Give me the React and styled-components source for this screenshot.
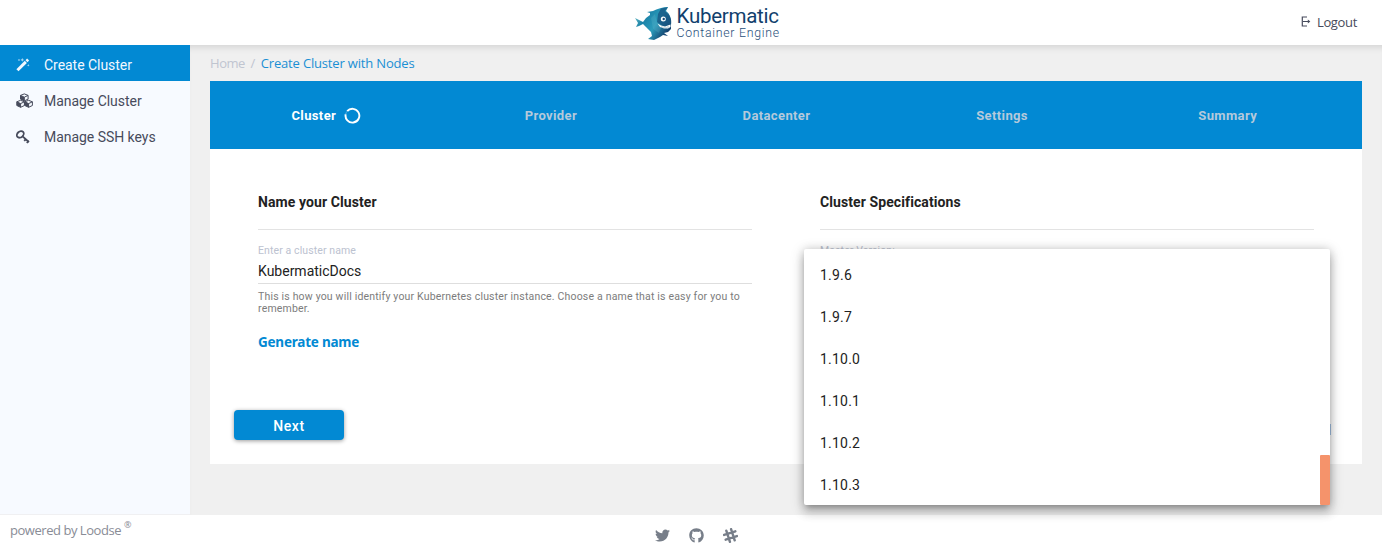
import React from "react";
import styled, { createGlobalStyle } from "styled-components";
import { FaTwitter, FaGithub } from "react-icons/fa";

const GlobalStyle = createGlobalStyle`
  * { box-sizing: border-box; }
  body { margin: 0; background: #f0f0f0; font-family: Roboto, sans-serif; overflow: hidden; }
`;

const Page = styled.div`
  position: relative;
  display: flex;
  flex-direction: column;
  height: 555px;
  width: 100%;
`;

const Header = styled.header`
  display: grid;
  grid-template-columns: 1fr 146px 1fr;
  align-items: center;
  height: 45px;
  padding-right: 25px;
  padding-left: 59px;
  background: #fff;
`;

const LogoSlot = styled.div`
  grid-column: 2;
  height: 45px;
  svg { display: block; }
`;

const Logout = styled.a`
  display: flex;
  justify-content: flex-end;
  align-items: center;
  gap: 6px;
  margin-top: -2px;
  color: #474b5c;
  font: 400 13px/20px "Open Sans", sans-serif;
  letter-spacing: -0.34px;
`;

const Body = styled.div`
  display: flex;
  height: 470px;
`;

const Sidebar = styled.nav`
  width: 190px;
  background: #f7faff;
  border-bottom: 1px solid #f0f0f2;
`;

const NavItem = styled.a`
  display: flex;
  align-items: center;
  height: 36px;
  padding: 3px 0 0 16px;
  font-size: 14px;
  letter-spacing: -0.04px;
  color: ${(p) => (p.$active ? "#f2f8ff" : "#474b5c")};
  background: ${(p) => (p.$active ? "#0289d3" : "transparent")};
`;

const NavIcon = styled.span`
  display: flex;
  width: 28px;
`;

const Main = styled.main`
  flex: 1;
  padding: 0 20px;
  box-shadow: inset 0 7px 7px -5px rgba(0, 0, 0, 0.13);
`;

const Breadcrumb = styled.div`
  display: flex;
  gap: 5.5px;
  height: 36px;
  padding-top: 8px;
  font: 400 13px/20px "Open Sans", sans-serif;
  color: #c0c5d0;
`;

const Crumb = styled.span`
  color: ${(p) => (p.$current ? "#1a8fd4" : "#c0c5d0")};
  letter-spacing: ${(p) => p.$spacing || "0"};
`;

const Stepper = styled.div`
  display: grid;
  grid-template-columns: repeat(5, 1fr);
  height: 68px;
  padding: 0 21px 0 3px;
  background: #0289d3;
`;

const Step = styled.div`
  display: flex;
  align-items: center;
  justify-content: center;
  gap: 8px;
  font-size: 13px;
  font-weight: 700;
  letter-spacing: 0.38px;
  padding: ${(p) => (p.$active ? "1px 0 0 1px" : "1px 1px 0 0")};
  color: ${(p) => (p.$active ? "#fff" : "#b5c9db")};
`;

const Card = styled.section`
  height: 315px;
  padding: 44px 48px 0;
  background: #fff;
`;

const Columns = styled.div`
  display: grid;
  grid-template-columns: 1fr 1fr;
  column-gap: 68px;
  height: 217px;
`;

const Title = styled.h3`
  margin: 0;
  height: 37px;
  font-size: 14px;
  font-weight: 700;
  line-height: 18px;
  letter-spacing: 0.09px;
  color: #222;
  border-bottom: 1px solid #e3e3e3;
`;

const Label = styled.div`
  padding-top: 14px;
  font-size: 10.5px;
  line-height: 13px;
  letter-spacing: 0.1px;
  color: #bcc2d0;
`;

const Value = styled.div`
  height: 27px;
  padding-top: 5px;
  font-size: 14px;
  line-height: 18px;
  color: #222;
  border-bottom: 1px solid #dedede;
`;

const Hint = styled.p`
  margin: 7px 0 0;
  font-size: 10.5px;
  line-height: 12px;
  letter-spacing: 0.18px;
  color: #7c7c7c;
`;

const Generate = styled.a`
  display: block;
  margin-top: 17px;
  font: 700 13.5px/20px "Noto Sans", sans-serif;
  letter-spacing: -0.23px;
  color: #0289d3;
`;

const NextButton = styled.button`
  display: block;
  width: 110px;
  height: 30px;
  margin: 0 0 0 -24px;
  padding: 2px 0 0;
  border: 0;
  border-radius: 4px;
  background: #0289d3;
  color: #fff;
  font: 500 14px/20px Roboto, sans-serif;
  letter-spacing: 0.6px;
  box-shadow: 0 1px 4px rgba(0, 0, 0, 0.4);
`;

const FormActions = styled.div`
  display: flex;
  justify-content: space-between;
`;

const ActionEdge = styled.span`
  width: 1px;
  height: 11px;
  margin: 14px -17px 0 0;
  background: #a5c4e6;
`;

const Footer = styled.footer`
  display: grid;
  grid-template-columns: 1fr auto 1fr;
  height: 40px;
  padding: 0 10px;
  background: #fff;
`;

const Powered = styled.div`
  padding-top: 5px;
  color: #898c96;
  font: 400 13px/20px "Open Sans", sans-serif;
  letter-spacing: -0.46px;
  sup { font-size: 9px; line-height: 0; vertical-align: 7px; }
`;

const Social = styled.div`
  display: flex;
  gap: 19px;
  padding: 13px 0 0 10px;
  color: #777e89;
`;

const Menu = styled.div`
  position: absolute;
  left: 804px;
  top: 249px;
  width: 526px;
  height: 256px;
  padding-top: 5px;
  background: #fff;
  border-radius: 2px;
  box-shadow: 0 5px 5px -3px rgba(0, 0, 0, 0.2), 0 8px 10px 1px rgba(0, 0, 0, 0.14),
    0 3px 14px 2px rgba(0, 0, 0, 0.12), 0 0 8px rgba(0, 0, 0, 0.15);
`;

const Option = styled.div`
  height: 42px;
  padding-left: 16px;
  font-size: 14px;
  line-height: 42px;
  letter-spacing: 0.22px;
  color: #222;
`;

const ScrollThumb = styled.div`
  position: absolute;
  right: 0;
  bottom: 0;
  width: 10px;
  height: 50px;
  border-radius: 1px;
  background: #f5936b;
`;

function Logo() {
  return (
    <svg width="148" height="45" viewBox="0 0 148 45">
      <defs>
        <linearGradient id="fish" x1="0" y1="0" x2="1" y2="0.6">
          <stop offset="0" stopColor="#8fd8d2" />
          <stop offset="0.35" stopColor="#1b82a8" />
          <stop offset="0.65" stopColor="#2c9cbb" />
          <stop offset="1" stopColor="#123f6c" />
        </linearGradient>
      </defs>
      <path
        fill="url(#fish)"
        d="M0 18 L4 20 L8 22 L11 18 L15 15 L15 13 L12 12 L18 11 C22 9 28 7 33 7 L31 11 C35 14 37 19 36 25 L36 29 L33 32 L29 33 L33 36 L28 35 L25 37 L19 40 L13 39 L17 36 L16 32 L11 27 L8 24 L4 26 L1 27 L3 23 Z"
      />
      <path fill="#17517f" d="M26 8.5 L33 7 L30 11 L34 15 L36 20 L36 25 L28 26 L22 22 L23 14 Z" opacity=".75" />
      <path fill="#68b9cb" d="M16 18 L20 14 L22 23 L26 28 L24 33 L18 29 Z" opacity=".25" />
      <circle cx="28.3" cy="19" r="2.5" fill="#fff" />
      <circle cx="28.7" cy="19" r="1.2" fill="#164a77" />
      <path fill="#fff" d="M22.5 23.5 L26 25.5 L30 26.5 L35.5 24.5 L35.5 27 L33 28.6 L29 28.6 L25 27 Z" />
      <path stroke="#236081" strokeWidth=".4" d="M27 26.3v1.8M29 26.8v2M31 26.8v2M33 26v2.2" />
      <text x="41.5" y="22.5" fill="#123f6d" fontFamily="Roboto, sans-serif" fontSize="20.5" textLength="102.5" lengthAdjust="spacing">Kubermatic</text>
      <text x="41.5" y="37.4" fill="#284f7b" fontFamily="Roboto, sans-serif" fontSize="12.3" fontWeight="300" textLength="102.5" lengthAdjust="spacing">Container Engine</text>
    </svg>
  );
}

function WandIcon() {
  return (
    <svg width="14" height="14" viewBox="0 0 14 14" fill="currentColor">
      <path d="M8.8 2.8 L10.9 4.9 L2.5 13.3 L.4 11.2 Z" />
      <path d="M9.5 2.2 L11.1.6 L13.1 2.6 L11.5 4.2Z" />
      <path d="M3 .7l.4.9.9.4-.9.4L3 3.3l-.4-.9L1.7 2l.9-.4zM6.3 0l.6 1.3 1.3.6-1.3.6-.6 1.3-.6-1.3-1.3-.6 1.3-.6zM12.3 6l.4.9.9.4-.9.4-.4.9-.4-.9-.9-.4.9-.4z" opacity=".7" />
    </svg>
  );
}

const cubeOrigins = [[4.3, 0.6], [0.6, 7], [8.6, 7]];

function CubesIcon() {
  return (
    <svg width="18" height="15" viewBox="0 0 18 15" fill="none" stroke="currentColor" strokeLinejoin="round">
      {cubeOrigins.map(([x, y]) => (
        <g key={`${x}-${y}`} transform={`translate(${x} ${y})`}>
          <path d="M4 .3 L7.8 1.8 V5.5 L4 7.3 L.2 5.5 V1.8 Z M4 3.6 V7.3 M7.8 1.8 L4 3.6 L.2 1.8" strokeWidth="1" />
          <path d="M.2 1.8 L4 3.6 V7.3 L.2 5.5 Z" fill="currentColor" stroke="none" />
        </g>
      ))}
    </svg>
  );
}

function KeyIcon() {
  return (
    <svg width="14" height="14" viewBox="0 0 14 14" fill="none" stroke="currentColor">
      <ellipse cx="4.3" cy="4.4" rx="3.8" ry="2.9" strokeWidth="1.8" transform="rotate(-42 4.3 4.4)" />
      <path d="M6.3 6.2 L12.8 12" strokeWidth="1.8" />
      <path d="M8.2 10.9l1.9-1.9M10.8 13l2-2.1" strokeWidth="1.8" />
    </svg>
  );
}

function LogoutIcon() {
  return (
    <svg width="10" height="11" viewBox="0 0 10 11" fill="none" stroke="currentColor">
      <path d="M6 1H1.3v9H6M2 5.5h5.5" strokeWidth="1.2" />
      <path d="M6.8 3.6 L9.3 5.5 L6.8 7.4Z" fill="currentColor" stroke="none" />
    </svg>
  );
}

function HashIcon() {
  return (
    <svg width="15" height="15" viewBox="0 0 15 15" fill="none" stroke="currentColor" strokeWidth="2.4" strokeLinecap="round">
      <g transform="rotate(-18 7.5 7.5)">
        <path d="M5 1.6 V13.4 M10 1.6 V13.4 M1.6 5 H13.4 M1.6 10 H13.4" />
      </g>
    </svg>
  );
}

function Spinner() {
  return (
    <svg width="17" height="17" viewBox="0 0 17 17" fill="none">
      <path d="M3.2 4.2 A6.9 6.9 0 1 1 1.7 7.2" stroke="#fff" strokeWidth="1.9" />
      <path d="M3.2 4.2 A6.9 6.9 0 0 0 1.7 7.2" stroke="#5cb3e4" strokeWidth="1" />
    </svg>
  );
}

const versions = ["1.9.6", "1.9.7", "1.10.0", "1.10.1", "1.10.2", "1.10.3"];

export default function App() {
  return (
    <Page>
      <GlobalStyle />
      <Header>
        <LogoSlot><Logo /></LogoSlot>
        <Logout><LogoutIcon /><span>Logout</span></Logout>
      </Header>
      <Body>
        <Sidebar>
          <NavItem $active><NavIcon><WandIcon /></NavIcon>Create Cluster</NavItem>
          <NavItem><NavIcon><CubesIcon /></NavIcon>Manage Cluster</NavItem>
          <NavItem><NavIcon><KeyIcon /></NavIcon>Manage SSH keys</NavItem>
        </Sidebar>
        <Main>
          <Breadcrumb>
            <Crumb $spacing="-0.45px">Home</Crumb>
            <Crumb>/</Crumb>
            <Crumb $current $spacing="-0.17px">Create Cluster with Nodes</Crumb>
          </Breadcrumb>
          <Stepper>
            <Step $active>Cluster<Spinner /></Step>
            <Step>Provider</Step>
            <Step>Datacenter</Step>
            <Step>Settings</Step>
            <Step>Summary</Step>
          </Stepper>
          <Card>
            <Columns>
              <div>
                <Title>Name your Cluster</Title>
                <Label>Enter a cluster name</Label>
                <Value>KubermaticDocs</Value>
                <Hint>This is how you will identify your Kubernetes cluster instance. Choose a name that is easy for you to remember.</Hint>
                <Generate>Generate name</Generate>
              </div>
              <div>
                <Title>Cluster Specifications</Title>
                <Label>Master Version:</Label>
              </div>
            </Columns>
            <FormActions>
              <NextButton>Next</NextButton>
              <ActionEdge />
            </FormActions>
          </Card>
        </Main>
      </Body>
      <Footer>
        <Powered>powered by Loodse <sup>®</sup></Powered>
        <Social>
          <FaTwitter size={15} />
          <FaGithub size={15} />
          <HashIcon />
        </Social>
      </Footer>
      <Menu>
        {versions.map((v) => <Option key={v}>{v}</Option>)}
        <ScrollThumb />
      </Menu>
    </Page>
  );
}
